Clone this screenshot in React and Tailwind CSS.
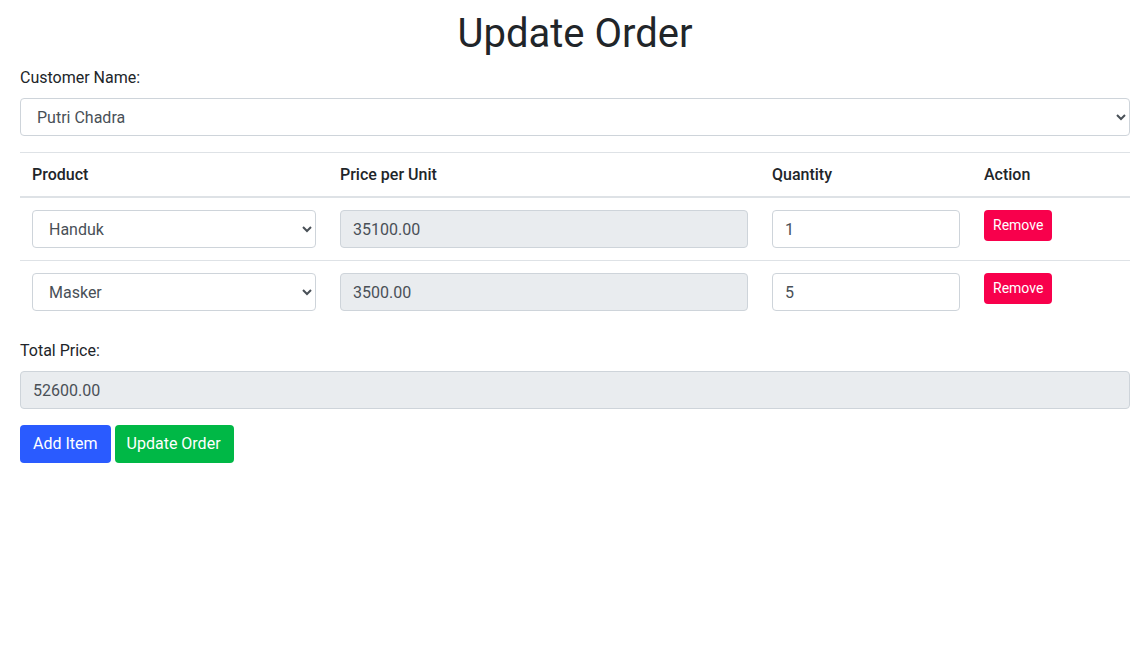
import React from "react";

const inputBase =
  "block w-full h-[38px] px-3 py-[6px] text-base leading-6 text-[#495057] border border-[#ced4da] rounded-[4px]";

function Select({ value }) {
  return (
    <select className={inputBase + " bg-white"} defaultValue={value}>
      <option>{value}</option>
    </select>
  );
}

const thCls =
  "text-left font-medium px-3 pt-[10px] pb-[9px] border-t border-b-2 border-[#dee2e6]";

export default function App() {
  const rows = [
    { product: "Handuk", price: "35100.00", qty: "1" },
    { product: "Masker", price: "3500.00", qty: "5" },
  ];
  return (
    <div
      className="pl-5 pr-[17px] pt-[10px] text-[#212529] text-base leading-6"
      style={{ fontFamily: "Roboto, 'Noto Sans', sans-serif" }}
    >
      <h1 className="text-center text-[40px] leading-[48px] font-normal mb-2">
        Update Order
      </h1>
      <div className="mb-4">
        <label className="block mb-2">Customer Name:</label>
        <Select value="Putri Chadra" />
      </div>
      <table className="w-full border-collapse mb-4 table-fixed">
        <thead>
          <tr>
            <th className={"w-[308px] " + thCls}>Product</th>
            <th className={"w-[432px] " + thCls}>Price per Unit</th>
            <th className={"w-[212px] " + thCls}>Quantity</th>
            <th className={thCls}>Action</th>
          </tr>
        </thead>
        <tbody>
          {rows.map((r, i) => (
            <tr key={i} className={i > 0 ? "border-t border-[#dee2e6]" : ""}>
              <td className="p-3 align-top">
                <Select value={r.product} />
              </td>
              <td className="p-3 align-top">
                <input
                  className={inputBase + " bg-[#e9ecef]"}
                  value={r.price}
                  readOnly
                />
              </td>
              <td className="p-3 align-top">
                <input
                  className={inputBase + " bg-white"}
                  defaultValue={r.qty}
                />
              </td>
              <td className="p-3 align-top">
                <button className="h-[31px] px-[9px] text-sm leading-[21px] text-white bg-[#f8004c] rounded-[4px]">
                  Remove
                </button>
              </td>
            </tr>
          ))}
        </tbody>
      </table>
      <div className="mb-4">
        <label className="block mb-2">Total Price:</label>
        <input
          className={inputBase + " bg-[#e9ecef]"}
          value="52600.00"
          readOnly
        />
      </div>
      <div className="flex gap-1">
        <button className="h-[38px] px-[13px] text-base leading-6 text-white bg-[#2a5bff] rounded-[4px]">
          Add Item
        </button>
        <button className="h-[38px] pl-3 pr-[13px] text-base leading-6 text-white bg-[#00b846] rounded-[4px]">
          Update Order
        </button>
      </div>
    </div>
  );
}
